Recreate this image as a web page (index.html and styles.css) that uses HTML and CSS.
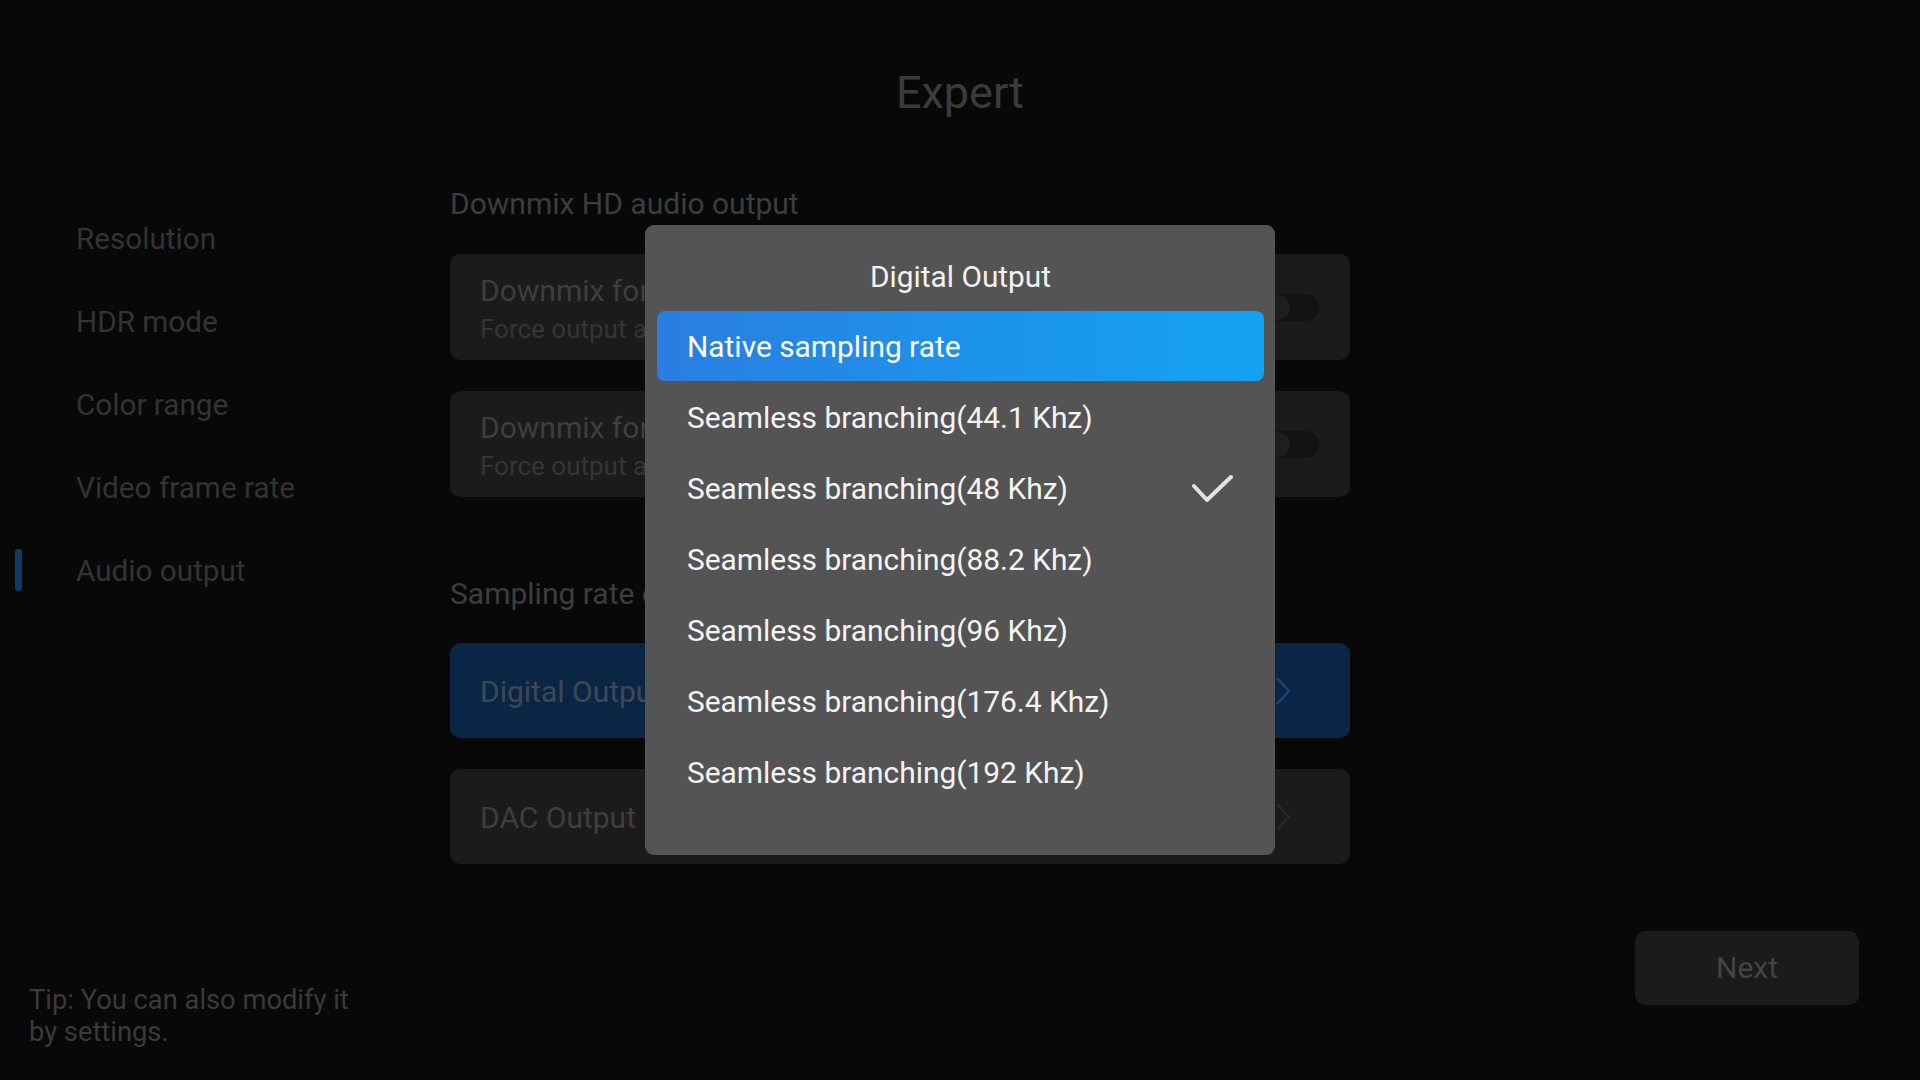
FILE: index.html
```html
<!DOCTYPE html>
<html lang="en">
<head>
<meta charset="utf-8">
<title>Expert</title>
<link rel="stylesheet" href="styles.css">
</head>
<body>
<div class="page">
  <header class="page-title">Expert</header>
  <div class="main">
    <nav class="sidebar">
      <div class="nav-item">Resolution</div>
      <div class="nav-item">HDR mode</div>
      <div class="nav-item">Color range</div>
      <div class="nav-item">Video frame rate</div>
      <div class="nav-item active">Audio output</div>
    </nav>
    <section class="content">
      <h2 class="section-title">Downmix HD audio output</h2>
      <div class="card">
        <div class="card-text">
          <div class="card-title">Downmix for HD audio</div>
          <div class="card-sub">Force output as PCM</div>
        </div>
        <div class="toggle"><span class="knob"></span></div>
      </div>
      <div class="card">
        <div class="card-text">
          <div class="card-title">Downmix for multichannel</div>
          <div class="card-sub">Force output as stereo</div>
        </div>
        <div class="toggle"><span class="knob"></span></div>
      </div>
      <h2 class="section-title second">Sampling rate output</h2>
      <div class="card link selected">
        <div class="card-title">Digital Output</div>
        <svg class="chev" width="18" height="30" viewBox="0 0 18 30"><path d="M3 2 L15 15 L3 28" fill="none" stroke="currentColor" stroke-width="2.2"/></svg>
      </div>
      <div class="card link">
        <div class="card-title">DAC Output</div>
        <svg class="chev" width="18" height="30" viewBox="0 0 18 30"><path d="M3 2 L15 15 L3 28" fill="none" stroke="currentColor" stroke-width="2.2"/></svg>
      </div>
    </section>
  </div>
  <footer class="footer">
    <p class="tip">Tip: You can also modify it<br>by settings.</p>
    <div class="next">Next</div>
  </footer>

  <div class="dialog">
    <div class="dialog-title">Digital Output</div>
    <ul class="options">
      <li class="option focused">Native sampling rate</li>
      <li class="option">Seamless branching(44.1 Khz)</li>
      <li class="option">Seamless branching(48 Khz)
        <svg class="check" width="42" height="30" viewBox="0 0 42 30"><path d="M3 12 L16 26 L40 3" fill="none" stroke="#e2e2e2" stroke-width="4" stroke-linecap="round" stroke-linejoin="round"/></svg>
      </li>
      <li class="option">Seamless branching(88.2 Khz)</li>
      <li class="option">Seamless branching(96 Khz)</li>
      <li class="option">Seamless branching(176.4 Khz)</li>
      <li class="option">Seamless branching(192 Khz)</li>
    </ul>
  </div>
</div>
</body>
</html>
```
FILE: styles.css
```css
* { box-sizing: border-box; }
html, body {
  margin: 0;
  padding: 0;
  background: #080808;
  font-family: Roboto, "Noto Sans", "Liberation Sans", sans-serif;
}
.page {
  position: relative;
  width: 1920px;
  height: 1080px;
  display: flex;
  flex-direction: column;
  overflow: hidden;
}
.page-title {
  margin-top: 67px;
  height: 52px;
  line-height: 52px;
  text-align: center;
  font-size: 45px;
  color: #3b3b3b;
}
.main {
  flex: 1;
  display: grid;
  grid-template-columns: 450px 900px;
  margin-top: 31px;
}
.sidebar {
  position: relative;
  padding-top: 47px;
}
.nav-item {
  height: 83px;
  line-height: 83px;
  padding-left: 76px;
  font-size: 29.7px;
  color: #333333;
  position: relative;
}
.nav-item.active::before {
  content: "";
  position: absolute;
  left: 15px;
  top: 20px;
  width: 7px;
  height: 42px;
  border-radius: 3px;
  background: #0f3a66;
}
.content {
  padding-top: 36px;
  display: flex;
  flex-direction: column;
}
.section-title {
  margin: 0 0 32px 0;
  font-weight: 400;
  font-size: 30px;
  line-height: 36px;
  color: #3d3d3d;
}
.section-title.second {
  margin-top: 48px;
  margin-bottom: 31px;
}
.card {
  height: 106px;
  border-radius: 10px;
  background: #1b1b1b;
  padding: 0 31px 0 30px;
  display: flex;
  align-items: center;
  justify-content: space-between;
  margin-bottom: 31px;
}
.card-text { display: flex; flex-direction: column; gap: 4px; margin-top: 3px; }
.card-title {
  font-size: 30px;
  line-height: 36px;
  color: #3e3e3e;
}
.card-sub {
  font-size: 26px;
  line-height: 32px;
  color: #353535;
}
.toggle {
  position: relative;
  width: 57px;
  height: 27px;
  border-radius: 14px;
  background: #131313;
}
.knob {
  position: absolute;
  left: 3px;
  top: 1px;
  width: 25px;
  height: 25px;
  border-radius: 50%;
  background: #1e1e1e;
}
.card.link {
  height: 95px;
  padding-right: 58px;
}
.card.link .card-title { margin-top: 2px; }
.card.selected {
  background: #0b2644;
}
.card.selected .card-title { color: #3d4957; }
.chev { color: #2a2a2a; }
.card.selected .chev { color: #1d4874; }
.footer {
  display: flex;
  justify-content: space-between;
  align-items: flex-end;
  padding: 0 61px 32px 29px;
}
.tip {
  margin: 0;
  font-size: 27.3px;
  line-height: 32px;
  color: #3a3a3a;
}
.next {
  width: 224px;
  height: 74px;
  line-height: 74px;
  margin-bottom: 43px;
  border-radius: 10px;
  background: #1b1b1b;
  text-align: center;
  font-size: 30px;
  color: #444444;
}
.dialog {
  position: absolute;
  left: 645px;
  top: 225px;
  width: 630px;
  height: 630px;
  border-radius: 9px;
  background: #545454;
  padding: 0 11px 0 12px;
}
.dialog-title {
  margin-top: 32px;
  height: 40px;
  line-height: 40px;
  margin-bottom: 14px;
  text-align: center;
  font-size: 29.8px;
  color: #f2f2f2;
}
.options {
  list-style: none;
  margin: 0;
  padding: 0;
}
.option {
  height: 71px;
  display: flex;
  align-items: center;
  justify-content: space-between;
  padding: 0 31px 0 30px;
  border-radius: 8px;
  font-size: 29.9px;
  color: #f4f4f4;
}
.option.focused {
  height: 70px;
  margin-bottom: 1px;
  background: linear-gradient(90deg, #2a7ee1 0%, #1d92ea 50%, #14a3f3 100%);
  color: #ffffff;
}
.check { display: block; }
```
